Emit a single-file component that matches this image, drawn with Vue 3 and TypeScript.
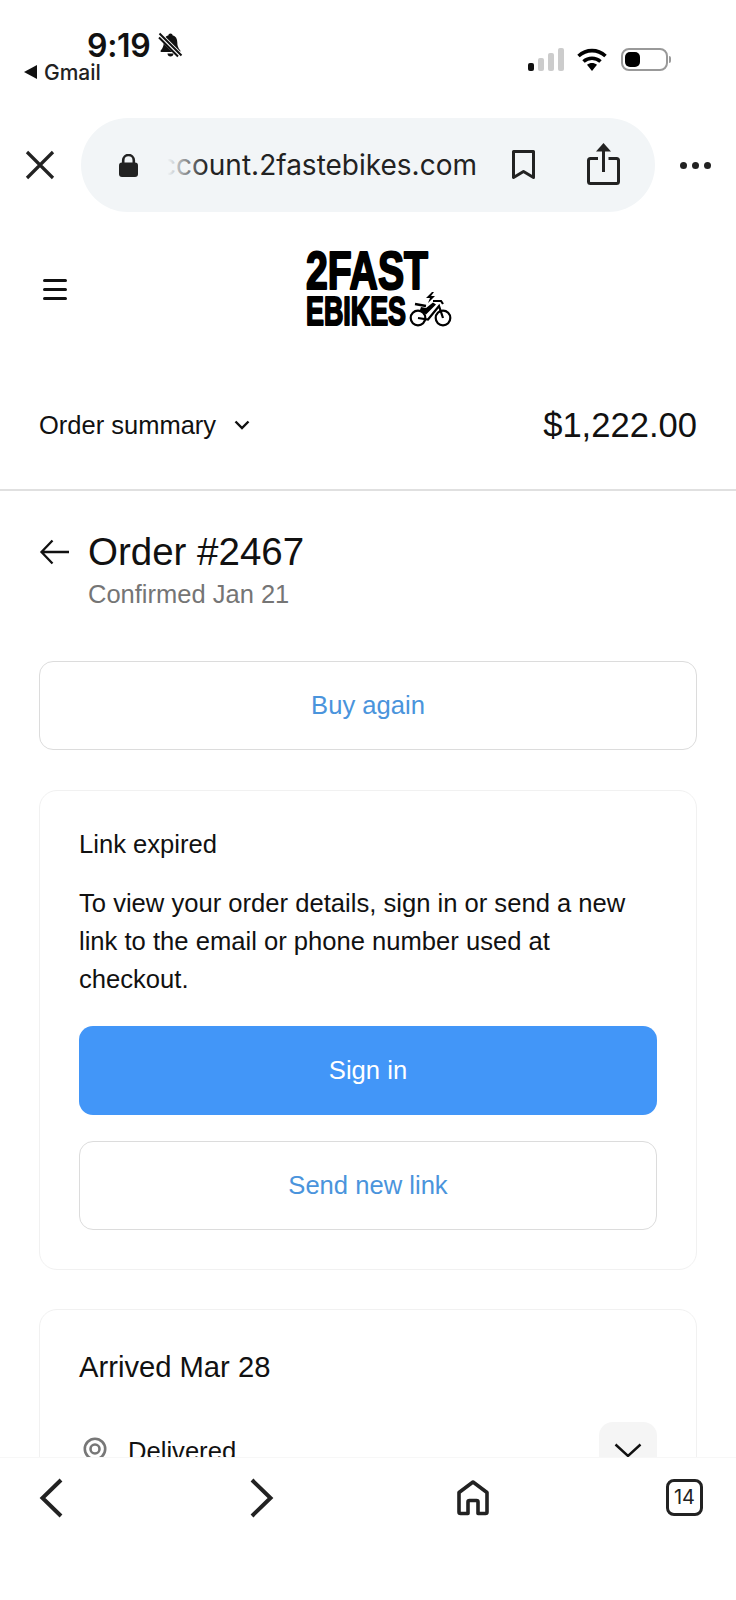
<script setup lang="ts">
const lines: string[] = [
  'To view your order details, sign in or send a new',
  'link to the email or phone number used at',
  'checkout.',
]
</script>

<template>
  <div class="page">
    <header class="status">
      <div class="status-left">
        <div class="time-row">
          <span class="time">9:19</span>
          <svg class="bell" width="25" height="26" viewBox="0 0 25 26">
            <path d="M12.5 1.5c1.3 0 2 .8 2 1.800 3.400.9 4.800 3.600 4.800 7.200 0 3.600.8 5.400 3 8 .5.8 0 1.500-.8 1.500H3.500c-.8 0-1.300-.7-.8-1.500 2.200-2.600 3-4.400 3-8 0-3.600 1.400-6.300 4.800-7.200 0-1 .7-1.800 2-1.800zM9.500 21.500h6c0 1.800-1.300 3-3 3s-3-1.200-3-3z" fill="#111" />
            <path d="M1.500 3l21 21" stroke="#fff" stroke-width="6" />
            <path d="M1.500 1.500l22 22M1 5.500l19 19" stroke="#111" stroke-width="2" />
          </svg>
        </div>
        <div class="back-app">
          <svg width="13" height="14" viewBox="0 0 13 14"><path d="M13 0v14L0 7z" fill="#111" /></svg>
          <span>Gmail</span>
        </div>
      </div>
      <div class="status-right">
        <div class="signal">
          <i class="bar on"></i><i class="bar b2"></i><i class="bar b3"></i><i class="bar b4"></i>
        </div>
        <svg class="wifi" width="30" height="23" viewBox="0 0 30 23">
          <path d="M1.500 8C9.500 .8 20.500 .8 28.500 8" fill="none" stroke="#000" stroke-width="3.600" />
          <path d="M6.500 13.500c5-4.400 12-4.400 17 0" fill="none" stroke="#000" stroke-width="3.600" />
          <path d="M10 16.800c3-2.400 7-2.400 10 0L15 23z" fill="#000" />
        </svg>
        <div class="battery">
          <div class="battery-body"><div class="battery-fill"></div></div>
          <div class="battery-cap"></div>
        </div>
      </div>
    </header>

    <nav class="browser">
      <svg class="close" width="30" height="30" viewBox="0 0 30 30">
        <path d="M2 2l26 26M28 2L2 28" stroke="#222" stroke-width="3.200" fill="none" />
      </svg>
      <div class="pill">
        <svg class="lock" width="19" height="23" viewBox="0 0 19 23">
          <path d="M4.200 10V6.300a5.300 5.300 0 0 1 10.600 0V10" fill="none" stroke="#222" stroke-width="2.600" />
          <rect x="0" y="8.500" width="19" height="14.500" rx="3" fill="#222" />
        </svg>
        <div class="url-wrap">
          <span class="url">account.2fastebikes.com</span>
          <div class="url-fade"></div>
        </div>
        <svg class="bookmark" width="23" height="30" viewBox="0 0 23 30">
          <path d="M1.500 1.500h20v26l-10-6-10 6z" fill="none" stroke="#222" stroke-width="3" stroke-linejoin="round" />
        </svg>
        <svg class="share" width="33" height="42" viewBox="0 0 33 42">
          <path d="M11 15.500H3.500a2 2 0 0 0-2 2V38.500a2 2 0 0 0 2 2h26a2 2 0 0 0 2-2V17.500a2 2 0 0 0-2-2H21.500" fill="none" stroke="#222" stroke-width="3" />
          <path d="M16.500 5v24" stroke="#222" stroke-width="3" />
          <path d="M16.500 0l7.500 8.500H9z" fill="#222" />
        </svg>
      </div>
      <div class="dots"><i></i><i></i><i></i></div>
    </nav>

    <div class="viewport">
      <section class="shop-head">
        <div class="burger"><i></i><i></i><i></i></div>
        <svg class="logo" width="148" height="92" viewBox="0 -8 148 92">
          <text class="logo-line" x="2" y="41" font-size="54" textLength="122" lengthAdjust="spacingAndGlyphs" stroke-width="2.200">2FAST</text>
          <text class="logo-line" x="2" y="77" font-size="40" textLength="100" lengthAdjust="spacingAndGlyphs" stroke-width="2">EBIKES</text>
          <circle cx="114" cy="70" r="7.300" fill="none" stroke="#000" stroke-width="2.200" />
          <circle cx="139" cy="70" r="7.300" fill="none" stroke="#000" stroke-width="2.200" />
          <path d="M114 70l10 1.500L135 58l4 12" fill="none" stroke="#000" stroke-width="2.200" />
          <path d="M116 62l6 4.500 10-10-3-2-7 5.500-5-1z" fill="#000" />
          <path d="M111 56l11 2" stroke="#000" stroke-width="2.400" />
          <path d="M129 53h8l2 3" fill="none" stroke="#000" stroke-width="2.200" />
          <path d="M128 44l-6 6h4l-2 5 7-7h-4l3-4z" fill="#000" />
        </svg>
      </section>

      <section class="summary">
        <div class="summary-left">
          <span>Order summary</span>
          <svg width="16" height="10" viewBox="0 0 16 10"><path d="M1.500 1.500L8 8l6.500-6.500" fill="none" stroke="#111" stroke-width="2.400" /></svg>
        </div>
        <div class="total">$1,222.00</div>
      </section>

      <main class="content">
        <div class="order-head">
          <svg class="arrow" width="32" height="26" viewBox="0 0 32 26">
            <path d="M30 13H2.500M13.500 1.500L2.500 13l11 11.500" fill="none" stroke="#111" stroke-width="2.300" />
          </svg>
          <div>
            <h1>Order #2467</h1>
            <p class="confirmed">Confirmed Jan 21</p>
          </div>
        </div>

        <button class="btn btn-outline buy">Buy again</button>

        <div class="card">
          <div class="card-title">Link expired</div>
          <p class="card-text"><span v-for="l in lines" :key="l" class="line">{{ l }}</span></p>
          <button class="btn btn-primary">Sign in</button>
          <button class="btn btn-outline">Send new link</button>
        </div>

        <div class="card card-arrived">
          <div class="arrived">Arrived Mar 28</div>
          <div class="status-row">
            <svg class="target" width="24" height="24" viewBox="0 0 24 24">
              <circle cx="12" cy="12" r="10.200" fill="none" stroke="#777" stroke-width="2.600" />
              <circle cx="12" cy="12" r="4.500" fill="none" stroke="#777" stroke-width="2.600" />
            </svg>
            <span class="delivered">Delivered</span>
            <div class="expand">
              <svg width="28" height="16" viewBox="0 0 28 16"><path d="M1.500 1.500L14 13 26.500 1.500" fill="none" stroke="#111" stroke-width="2.400" /></svg>
            </div>
          </div>
        </div>
      </main>
    </div>

    <footer class="toolbar">
      <svg class="tb-back" width="24" height="40" viewBox="0 0 24 40"><path d="M22 2L3.500 20 22 38" fill="none" stroke="#222" stroke-width="4" /></svg>
      <svg class="tb-forward" width="24" height="40" viewBox="0 0 24 40"><path d="M2 2l18.500 18L2 38" fill="none" stroke="#222" stroke-width="4" /></svg>
      <svg class="tb-home" width="32" height="36" viewBox="0 0 32 36">
        <path d="M16 2L2 12.500V32a1.500 1.500 0 0 0 1.500 1.500H11V22a1.500 1.500 0 0 1 1.500-1.500h7A1.500 1.500 0 0 1 21 22v11.500h7.500A1.500 1.500 0 0 0 30 32V12.500z" fill="none" stroke="#222" stroke-width="3.600" stroke-linejoin="round" />
      </svg>
      <div class="tabs">14</div>
    </footer>
  </div>
</template>

<style scoped>
.page {
  width: 736px;
  height: 1600px;
  display: flex;
  flex-direction: column;
  overflow: hidden;
  background: #fff;
  color: #111;
  font-family: "Liberation Sans", Arial, sans-serif;
}
.status {
  height: 118px;
  flex: none;
  display: flex;
  justify-content: space-between;
  padding: 28px 65px 0 24px;
  box-sizing: border-box;
}
.status-left { display: flex; flex-direction: column; }
.time-row { display: flex; align-items: center; gap: 8px; padding-left: 63px; height: 34px; }
.time { font-family: Inter, sans-serif; font-size: 32px; font-weight: 600; letter-spacing: -0.3px; color: #111; }
.back-app { display: flex; align-items: center; gap: 7px; height: 20px; font-family: Inter, sans-serif; font-size: 21px; font-weight: 500; color: #222; }
.status-right { display: flex; align-items: center; height: 23px; margin-top: 20px; }
.signal { display: flex; align-items: flex-end; gap: 4px; height: 23px; margin-right: 13px; }
.bar { display: block; width: 6px; border-radius: 2px; background: #ccc; }
.bar.on { height: 8px; background: #111; }
.b2 { height: 13px; }
.b3 { height: 18px; }
.b4 { height: 23px; }
.wifi { margin-right: 14px; }
.battery { display: flex; align-items: center; }
.battery-body { width: 39px; height: 15px; border: 2px solid #999; border-radius: 8px; padding: 2px; box-sizing: content-box; }
.battery-fill { width: 15px; height: 15px; background: #000; border-radius: 5px; }
.battery-cap { width: 2px; height: 7px; background: #999; border-radius: 0 2px 2px 0; margin-left: 1px; }

.browser { height: 94px; flex: none; display: flex; align-items: center; padding: 0 24px 0 25px; }
.close { flex: none; margin-right: 26px; }
.pill {
  width: 574px;
  height: 94px;
  flex: none;
  border-radius: 47px;
  background: #f2f5f7;
  display: flex;
  align-items: center;
  padding: 0 0 0 38px;
  box-sizing: border-box;
}
.lock { flex: none; }
.url-wrap { position: relative; width: 314px; margin-left: 25px; flex: none; overflow: hidden; white-space: nowrap; direction: rtl; height: 40px; line-height: 40px; }
.url { font-family: Inter, sans-serif; font-size: 28px; color: #222; unicode-bidi: plaintext; }
.url-fade { position: absolute; left: 0; top: 0; bottom: 0; width: 44px; background: linear-gradient(90deg, #f2f5f7 10%, rgba(242, 245, 247, 0)); }
.bookmark { flex: none; margin-left: 35px; }
.share { flex: none; margin-left: 52px; margin-top: -2px; }
.dots { display: flex; gap: 5px; margin-left: 25px; }
.dots i { display: block; width: 7px; height: 7px; border-radius: 50%; background: #222; }

.viewport { flex: 1; min-height: 0; overflow: hidden; }
.shop-head { height: 146px; position: relative; display: flex; justify-content: center; align-items: flex-start; }
.burger { position: absolute; left: 43px; top: 67px; display: flex; flex-direction: column; gap: 6.500px; }
.burger i { display: block; width: 24px; height: 2.600px; border-radius: 2px; background: #111; }
.logo { flex: none; margin: 28px 0 0 20px; }
.logo-line { font-family: "Liberation Sans", sans-serif; font-weight: 700; fill: #000; stroke: #000; stroke-linejoin: round; }

.summary { display: flex; justify-content: space-between; align-items: center; height: 133px; padding: 3px 39px 0; border-bottom: 2px solid #e0e0e0; box-sizing: border-box; }
.summary-left { display: flex; align-items: center; gap: 18px; font-size: 25.500px; }
.total { font-size: 34.600px; }

.content { padding: 39px 39px 0; }
.order-head { display: flex; gap: 17px; }
.arrow { flex: none; margin-top: 9px; }
h1 { margin: 0; font-size: 38.500px; font-weight: 400; line-height: 44px; }
.confirmed { margin: 5px 0 0; font-size: 25.500px; line-height: 30px; color: #757575; }

.btn { display: block; width: 100%; height: 89px; border-radius: 14px; font-family: inherit; font-size: 25.600px; box-sizing: border-box; }
.btn-outline { background: #fff; border: 1.500px solid #dcdcdc; color: #4a94dc; }
.btn-primary { background: #4296f8; border: 0; color: #fff; margin-bottom: 26px; }
.buy { margin-top: 52px; }

.card { border: 1px solid #f1f1f1; border-radius: 18px; margin-top: 40px; padding: 38px 39px 39px; }
.card-title { font-size: 25.600px; line-height: 30px; }
.card-text { margin: 25px 0 28px; font-size: 25.600px; line-height: 38px; }
.line { display: block; white-space: nowrap; }
.card-arrived { margin-top: 39px; padding-top: 40px; }
.arrived { font-size: 29.200px; line-height: 34px; }
.status-row { display: flex; align-items: center; margin-top: 38px; height: 58px; padding-left: 4px; }
.target { flex: none; margin-top: -4px; }
.delivered { font-size: 25.600px; margin-left: 21px; }
.expand { margin-left: auto; width: 58px; height: 58px; border-radius: 14px; background: #f5f5f5; display: flex; align-items: center; justify-content: center; }

.toolbar { height: 143px; flex: none; background: #fff; border-top: 1px solid #f7f7f7; box-sizing: border-box; display: flex; align-items: flex-start; padding: 20px 0 0 39px; position: relative; }
.tb-forward { margin-left: 187px; }
.tb-home { margin-left: 183px; margin-top: 2px; }
.tabs { margin-left: 177px; width: 37px; height: 37px; margin-top: 1px; box-sizing: border-box; border: 3.500px solid #222; border-radius: 8px; font-family: Inter, sans-serif; font-size: 20px; line-height: 30px; text-align: center; color: #222; }
</style>
